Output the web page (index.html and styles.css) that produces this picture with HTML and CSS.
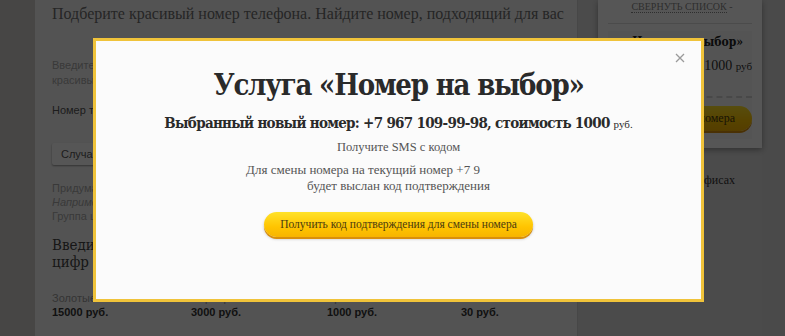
FILE: index.html
```html
<!DOCTYPE html>
<html lang="ru">
<head>
<meta charset="utf-8">
<title>Услуга «Номер на выбор»</title>
<link rel="stylesheet" href="styles.css">
</head>
<body>
<div class="page">
  <div class="strip"></div>
  <main class="main">
    <h1 class="lead">Подберите красивый номер телефона. Найдите номер, подходящий для вас</h1>
    <p class="hint">Введите желаемую комбинацию цифр, и мы подберём<br>красивый номер из свободных</p>
    <p class="label">Номер телефона</p>
    <div class="btnrow"><span class="graybtn">Случайный номер</span></div>
    <p class="hint small">Придумайте комбинацию цифр<br><i>Например, 777 или 1234</i><br>Группа цифр может стоять в любом месте</p>
    <p class="ask">Введите от 3 до 7 цифр для поиска номера<br>цифр (от 3 до 7)</p>
    <div class="prices">
      <div class="price"><span class="pname">Золотые</span><b>15000 руб.</b></div>
      <div class="price"><span class="pname">Серебряные</span><b>3000 руб.</b></div>
      <div class="price"><span class="pname">Бронзовые</span><b>1000 руб.</b></div>
      <div class="price"><span class="pname">Обычные</span><b>30 руб.</b></div>
    </div>
  </main>
  <div class="gap"></div>
  <aside class="side">
    <div class="panel">
      <div class="collapse"><span class="clink">Свернуть список</span> <span class="arr">-</span></div>
      <div class="card">
        <div class="cname"><span>Услуга «Номер на выбор»</span></div>
        <div class="ccost">1000 <small>руб</small></div>
        <div class="cfoot"><span class="sbtn">Смена номера</span></div>
      </div>
    </div>
    <div class="offices">Оплата в офисах</div>
  </aside>
</div>

<div class="overlay"></div>

<div class="modal">
  <span class="close">
    <svg width="10" height="10" viewBox="0 0 10 10"><path d="M1 1L9 9M9 1L1 9" stroke="#9a9a9a" stroke-width="1.3" fill="none"/></svg>
  </span>
  <h2 class="mtitle">Услуга «Номер на выбор»</h2>
  <p class="msub">Выбранный новый номер: +7 967 109-99-98, стоимость 1000 <small>руб.</small></p>
  <p class="mtext">Получите SMS с кодом</p>
  <p class="mtext two">Для смены номера на текущий номер +7 9<span class="hide"></span><br>будет выслан код подтверждения</p>
  <div class="mact"><span class="ybtn">Получить код подтверждения для смены номера</span></div>
</div>
</body>
</html>
```

FILE: styles.css
```css
* { box-sizing: border-box; }
html, body { margin: 0; padding: 0; }
body {
  width: 785px;
  height: 336px;
  overflow: hidden;
  background: #d9d9d9;
  font-family: "Liberation Sans", Arial, sans-serif;
  position: relative;
}
.page {
  display: flex;
  height: 336px;
}
.strip {
  width: 35px;
  background: #cfccc9;
}
.main {
  width: 543px;
  background: #f4f4f4;
  padding: 4px 0 0 17px;
  border-right: 1px solid #d0d0d0;
}
.lead {
  margin: 0;
  font-family: "Liberation Serif", serif;
  font-weight: normal;
  font-size: 16px;
  line-height: 20px;
  color: #6e6e6e;
  white-space: nowrap;
}
.hint {
  margin: 34px 0 0;
  font-size: 11px;
  line-height: 15px;
  color: #a8a8a8;
}
.hint.small { margin-top: 16px; line-height: 14px; }
.label {
  margin: 15px 0 0;
  font-size: 11px;
  line-height: 15px;
  color: #555;
}
.btnrow { margin-top: 25px; }
.graybtn {
  display: inline-block;
  height: 22px;
  line-height: 22px;
  padding: 0 9px;
  background: #fdfdfd;
  border-radius: 2px;
  box-shadow: 0 1px 2px rgba(0,0,0,0.4);
  font-size: 11px;
  color: #555;
}
.ask {
  margin: 14px 0 0;
  font-family: "DejaVu Serif Condensed", "DejaVu Serif", serif;
  font-size: 15px;
  line-height: 17px;
  color: #444;
}
.prices {
  display: grid;
  grid-template-columns: 139px 136px 134px 120px;
  margin-top: 20px;
  font-size: 11px;
  line-height: 14px;
}
.price { display: flex; flex-direction: column; }
.pname { color: #999; }
.price b { color: #333; }
.gap { width: 20px; background: #dcdcdc; }
.side {
  width: 164px;
  background: #dcdcdc;
  display: flex;
  flex-direction: column;
}
.panel {
  background: #fdfdfd;
  height: 148px;
  padding: 0 10px;
  box-shadow: 0 2px 6px rgba(0,0,0,0.35);
}
.collapse {
  height: 24px;
  border-bottom: 1px solid #ddd;
  text-align: center;
  font-family: "Liberation Serif", serif;
  font-size: 10px;
  line-height: 14px;
  color: #888;
  padding-left: 4px;
}
.clink { text-transform: uppercase; border-bottom: 1px dotted #888; }
.card {
  margin-top: 7px;
  background: #f7f7f7;
  height: 108px;
  padding-top: 3px;
  font-family: "DejaVu Serif Condensed", "DejaVu Serif", serif;
}
.cname {
  display: flex;
  justify-content: flex-end;
  overflow: hidden;
  white-space: nowrap;
  font-weight: bold;
  font-size: 12px;
  line-height: 16px;
  color: #222;
  padding-right: 9px;
}
.ccost {
  margin-top: 8px;
  text-align: right;
  font-family: "Liberation Serif", serif;
  font-size: 14px;
  color: #333;
}
.ccost small { font-size: 11px; }
.cfoot {
  margin-top: 22px;
  border-top: 2px dashed #d4d4d4;
  padding-top: 8px;
  display: flex;
  justify-content: flex-end;
}
.sbtn {
  width: 130px;
  height: 25px;
  line-height: 25px;
  border-radius: 13px;
  background: linear-gradient(#ffe22a, #ffc400 60%, #f7b400);
  box-shadow: 0 2px 0 #d98f0c;
  text-align: right;
  padding-right: 17px;
  font-family: "Liberation Serif", serif;
  font-size: 12px;
  color: #4a3b10;
}
.offices {
  margin-top: 25px;
  text-align: right;
  padding-right: 27px;
  white-space: nowrap;
  font-family: "Liberation Serif", serif;
  font-size: 12px;
  color: #333;
}
.overlay {
  position: absolute;
  inset: 0;
  background: rgba(0, 0, 0, 0.66);
}
.modal {
  position: absolute;
  left: 93px;
  top: 38px;
  width: 611px;
  height: 264px;
  background: #fbfbfb;
  border: 3px solid #f0c33a;
  text-align: center;
  padding-top: 26px;
  font-family: "DejaVu Serif Condensed", "DejaVu Serif", serif;
  color: #2c2c2c;
}
.close {
  position: absolute;
  right: 16px;
  top: 12px;
  width: 10px;
  height: 10px;
  display: flex;
}
.mtitle {
  margin: 0;
  font-size: 29px;
  line-height: 36px;
  font-weight: bold;
  letter-spacing: -1.2px;
  color: #2a2a2a;
}
.msub {
  margin: 9px 0 0;
  font-size: 15px;
  line-height: 22px;
  font-weight: bold;
  letter-spacing: -0.7px;
  color: #2a2a2a;
}
.msub small { font-family: "Liberation Serif", serif; font-size: 11px; font-weight: normal; letter-spacing: 0; }
.mtext {
  margin: 4px 0 0;
  font-family: "Liberation Serif", serif;
  font-size: 12.5px;
  line-height: 16px;
  color: #555;
}
.mtext.two { margin-top: 7px; font-size: 13px; }
.hide { display: inline-block; width: 71px; }
.mact { margin-top: 18px; }
.ybtn {
  display: inline-block;
  height: 25px;
  line-height: 25px;
  padding: 0 16px;
  border-radius: 13px;
  background: linear-gradient(#ffe22a, #ffc400 60%, #f7b400);
  box-shadow: 0 2px 0 #d98f0c, 0 2px 3px rgba(0,0,0,0.25);
  font-family: "Liberation Serif", serif;
  font-size: 11.5px;
  color: #4a3b10;
}
```
